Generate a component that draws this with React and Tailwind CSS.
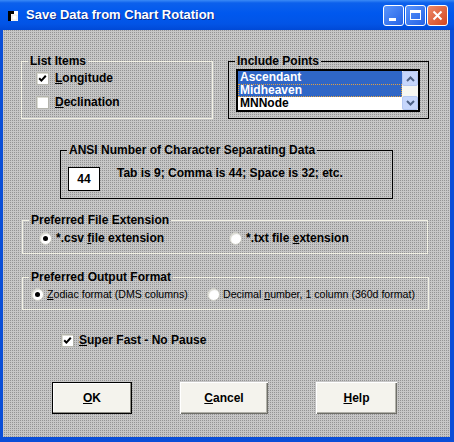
import React from "react";

const font = { fontFamily: '"Liberation Sans", Arial, sans-serif' };

function Check({ checked }) {
  return (
    <span className="w-[13px] h-[13px] shrink-0 bg-white border border-[#b4b4ac] shadow-[inset_1px_1px_0_#dcdcd4] flex items-center justify-center">
      {checked && (
        <svg width="9" height="9" viewBox="0 0 9 9">
          <path d="M1.2 4.2 L3.4 6.6 L7.8 1.8" stroke="#000" strokeWidth="2" fill="none" />
        </svg>
      )}
    </span>
  );
}

function Radio({ checked }) {
  return (
    <span className="w-[13px] h-[13px] shrink-0 rounded-full bg-white border border-[#c8c8c0] shadow-[inset_1px_1px_1px_#d8d8d0] flex items-center justify-center">
      {checked && <span className="w-[5px] h-[5px] rounded-full bg-black" />}
    </span>
  );
}

function Chevron({ up }) {
  return (
    <svg width="9" height="6" viewBox="0 0 9 6">
      <path
        d={up ? "M1 5 L4.5 1.5 L8 5" : "M1 1 L4.5 4.5 L8 1"}
        stroke="#4d6185"
        strokeWidth="2"
        fill="none"
      />
    </svg>
  );
}

export default function App() {
  return (
    <div
      className="w-[454px] h-[442px] bg-[#0a4ed8] flex flex-col text-black text-[12px]"
      style={font}
    >
      {/* Title bar */}
      <div className="h-[30px] shrink-0 flex items-center bg-[linear-gradient(#3a8af6_0%,#0c60ec_10%,#0058ee_45%,#0254e6_80%,#0049d6_100%)]">
        <div className="ml-[8px] w-[10px] h-[10px] mt-[2px]">
          <svg width="10" height="10" viewBox="0 0 10 10">
            <rect x="0" y="0" width="10" height="10" fill="#fff" />
            <rect x="0" y="0" width="3" height="10" fill="#000" />
            <rect x="0" y="0" width="6" height="3" fill="#000" />
            <rect x="4" y="4" width="5" height="5" fill="#fff" stroke="#cfcfcf" strokeWidth="0.6" />
          </svg>
        </div>
        <span className="ml-[8px] text-white font-bold text-[13px] [text-shadow:1px_1px_0_#0a2a8a]">
          Save Data from Chart Rotation
        </span>
        <div className="ml-auto mr-[6px] flex gap-[1px]">
          <div className="w-[21px] h-[21px] rounded-[3px] border border-white bg-[linear-gradient(135deg,#5b95fb,#2462e6)] flex items-end justify-start pl-[5px] pb-[4px]">
            <span className="w-[7px] h-[3px] bg-white" />
          </div>
          <div className="w-[21px] h-[21px] rounded-[3px] border border-white bg-[linear-gradient(135deg,#5b95fb,#2462e6)] flex items-center justify-center">
            <span className="w-[11px] h-[10px] border border-white border-t-[3px]" />
          </div>
          <div className="w-[21px] h-[21px] rounded-[3px] border border-white bg-[linear-gradient(135deg,#ec8a6a,#d4461f)] flex items-center justify-center">
            <svg width="11" height="11" viewBox="0 0 11 11">
              <path d="M1.5 1.5 L9.5 9.5 M9.5 1.5 L1.5 9.5" stroke="#fff" strokeWidth="2" />
            </svg>
          </div>
        </div>
      </div>

      {/* Body */}
      <div className="ml-[3px] mr-[4px] h-[407px] bg-[conic-gradient(#939393_25%,#c6c6c6_0)] bg-[length:2px_2px] flex flex-col">
        {/* Row 1 */}
        <div className="mt-[24px] pl-[18px] flex gap-[15px]">
          <fieldset className="w-[192px] h-[65px] min-w-0 border border-[#f2f1e4]">
            <legend className="ml-[6px] px-[2px] font-bold leading-[14px]">List Items</legend>
            <div className="pl-[14px] flex flex-col gap-[4px] font-bold">
              <div className="h-[20px] flex items-center gap-[6px]">
                <Check checked />
                <span>
                  <span className="underline underline-offset-[1px]">L</span>ongitude
                </span>
              </div>
              <div className="h-[20px] flex items-center gap-[6px]">
                <Check />
                <span>
                  <span className="underline underline-offset-[1px]">D</span>eclination
                </span>
              </div>
            </div>
          </fieldset>
          <fieldset className="w-[201px] h-[65px] min-w-0 border border-black">
            <legend className="ml-[6px] px-[2px] font-bold leading-[14px]">Include Points</legend>
            <div className="pl-[7px] pt-[1px]">
              <div className="w-[184px] h-[43px] border-2 border-black bg-white flex">
                <div className="flex-1 flex flex-col font-bold leading-[13px]">
                  <div className="h-[13px] bg-[#2f66c6] text-white pl-[2px]">Ascendant</div>
                  <div className="h-[13px] bg-[#2f66c6] text-white pl-[1px] border border-dotted border-[#e0a040] leading-[11px]">Midheaven</div>
                  <div className="h-[13px] pl-[2px]">MNNode</div>
                </div>
                <div className="w-[16px] flex flex-col bg-[#f7f7f2]">
                  <div className="h-[15px] rounded-[2px] border border-[#b6c9f2] bg-[#c6d6fb] flex items-center justify-center">
                    <Chevron up />
                  </div>
                  <div className="flex-1" />
                  <div className="h-[14px] rounded-[2px] border border-[#b6c9f2] bg-[#c6d6fb] flex items-center justify-center">
                    <Chevron />
                  </div>
                </div>
              </div>
            </div>
          </fieldset>
        </div>

        {/* ANSI */}
        <fieldset className="mt-[24px] ml-[57px] w-[333px] h-[56px] min-w-0 border border-black">
          <legend className="ml-[6px] px-[2px] font-bold leading-[14px]">
            ANSI Number of Character Separating Data
          </legend>
          <div className="pl-[7px] pt-[10px] flex items-start font-bold">
            <div className="w-[32px] h-[24px] border border-black bg-white flex items-center justify-center">
              44
            </div>
            <span className="ml-[17px] mt-[-1px] leading-[14px]">
              Tab is 9; Comma is 44; Space is 32; etc.
            </span>
          </div>
        </fieldset>

        {/* File extension */}
        <fieldset className="mt-[14px] ml-[19px] w-[406px] h-[41px] min-w-0 border border-[#f2f1e4]">
          <legend className="ml-[6px] px-[2px] font-bold leading-[14px]">Preferred File Extension</legend>
          <div className="pt-[1px] pl-[16px] h-[21px] flex items-center font-bold">
            <div className="w-[190px] flex items-center gap-[4px]">
              <Radio checked />
              <span>
                *.csv <span className="underline underline-offset-[1px]">f</span>ile extension
              </span>
            </div>
            <div className="flex items-center gap-[4px]">
              <Radio />
              <span>
                *.txt file <span className="underline underline-offset-[1px]">e</span>xtension
              </span>
            </div>
          </div>
        </fieldset>

        {/* Output format */}
        <fieldset className="mt-[16px] ml-[19px] w-[407px] h-[40px] min-w-0 border border-[#f2f1e4]">
          <legend className="ml-[6px] px-[2px] font-bold leading-[14px]">Preferred Output Format</legend>
          <div className="pt-[1px] pl-[8px] h-[21px] flex items-center text-[10.6px]">
            <div className="w-[176px] flex items-center gap-[3px]">
              <Radio checked />
              <span>
                <span className="underline underline-offset-[1px]">Z</span>odiac format (DMS columns)
              </span>
            </div>
            <div className="flex items-center gap-[3px]">
              <Radio />
              <span>
                Decimal <span className="underline underline-offset-[1px]">n</span>umber, 1 column (360d format)
              </span>
            </div>
          </div>
        </fieldset>

        {/* Super fast */}
        <div className="mt-[20px] ml-[58px] h-[20px] flex items-center gap-[5px] font-bold">
          <Check checked />
          <span>
            <span className="underline underline-offset-[1px]">S</span>uper Fast - No Pause
          </span>
        </div>

        {/* Buttons */}
        <div className="mt-[32px] pl-[49px] flex gap-[48px] font-bold">
          <div className="w-[80px] h-[32px] border border-black bg-[#f4f3ed] shadow-[inset_-1px_-1px_0_#8c8c84,inset_1px_1px_0_#ffffff] flex items-center justify-center">
            <span>
              <span className="underline underline-offset-[1px]">O</span>K
            </span>
          </div>
          <div className="w-[88px] h-[32px] bg-[#f4f3ed] shadow-[inset_1px_1px_0_#ffffff,inset_-1px_-1px_0_#6e6e68,inset_-2px_-2px_0_#b0b0a8] flex items-center justify-center">
            <span>
              <span className="underline underline-offset-[1px]">C</span>ancel
            </span>
          </div>
          <div className="w-[81px] h-[32px] bg-[#f4f3ed] shadow-[inset_1px_1px_0_#ffffff,inset_-1px_-1px_0_#6e6e68,inset_-2px_-2px_0_#b0b0a8] flex items-center justify-center">
            <span>
              <span className="underline underline-offset-[1px]">H</span>elp
            </span>
          </div>
        </div>
      </div>
    </div>
  );
}
